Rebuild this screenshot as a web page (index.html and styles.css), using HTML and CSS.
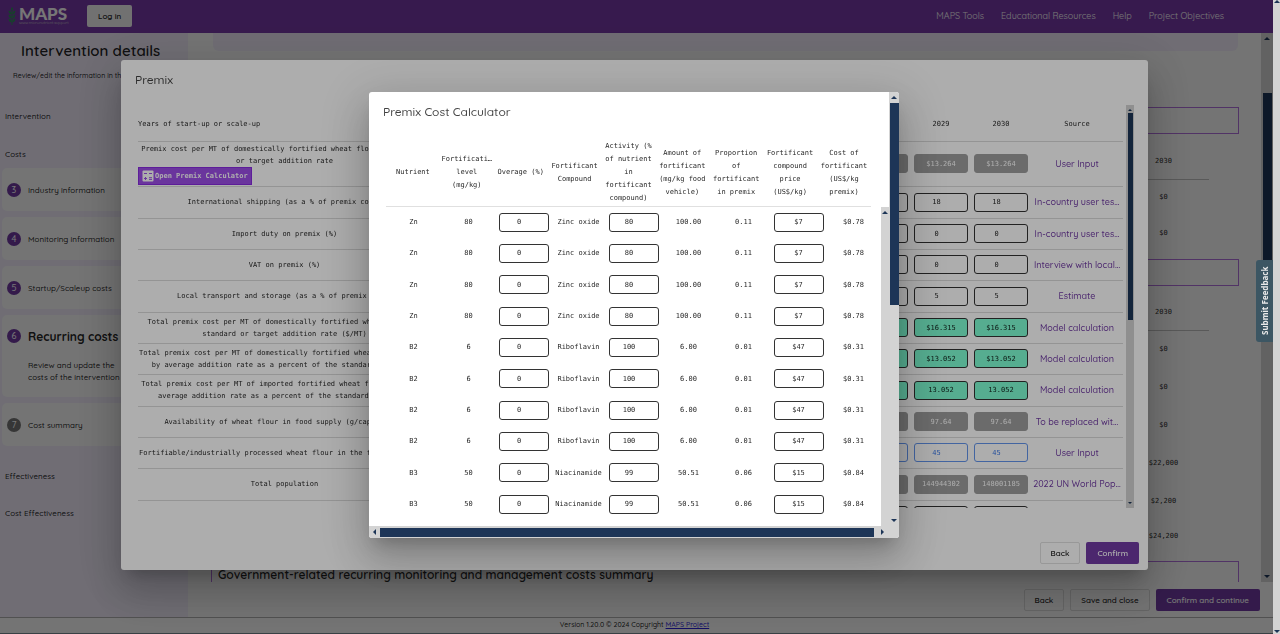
FILE: index.html
```html
<!DOCTYPE html>
<html lang="en">
<head>
<meta charset="utf-8">
<title>MAPS - Intervention details</title>
<link rel="stylesheet" href="styles.css">
</head>
<body>
<div class="app">
  <header class="topbar">
    <a class="logo" href="#">
      <svg class="logo-mark" viewBox="0 0 8 18" aria-hidden="true">
        <path d="M4 1v17" stroke="#2f8f5b" stroke-width="1"/>
        <path d="M4 4C2.500 3 3 1 4 0c1 1 1.500 3 0 4zM3.600 7.500C1 7.200.5 5 .7 3.500c2 .4 3 2 2.900 4zM4.400 7.500C7 7.200 7.500 5 7.300 3.500c-2 .4-3 2-2.900 4zM3.600 11.500C1 11.200.5 9 .7 7.500c2 .4 3 2 2.900 4zM4.400 11.500C7 11.200 7.500 9 7.300 7.500c-2 .4-3 2-2.900 4zM3.600 15.500C1 15.200.5 13 .7 11.500c2 .4 3 2 2.900 4zM4.400 15.500C7 15.200 7.500 13 7.300 11.500c-2 .4-3 2-2.900 4z" fill="#2f8f5b"/>
      </svg>
      <span class="logo-text"><strong>MAPS</strong><small>www.micronutrient.support</small></span>
    </a>
    <button class="btn login">Log in</button>
    <nav class="topnav">
      <a href="#">MAPS Tools</a>
      <a href="#">Educational Resources</a>
      <a href="#">Help</a>
      <a href="#">Project Objectives</a>
    </nav>
  </header>

  <main class="main">
    <aside class="sidebar">
      <h1>Intervention details</h1>
      <p class="intro">Review/edit the information in the</p>
      <h2 class="group">Intervention</h2>
      <h2 class="group costs">Costs</h2>
      <ol class="steps">
        <li class="step"><span class="num">3</span><span>Industry information</span></li>
        <li class="step"><span class="num">4</span><span>Monitoring information</span></li>
        <li class="step"><span class="num">5</span><span>Startup/Scaleup costs</span></li>
        <li class="step current"><span class="num">6</span><div><h3>Recurring costs</h3><p>Review and update the<br>costs of the intervention</p></div></li>
        <li class="step"><span class="num idle">7</span><span>Cost summary</span></li>
      </ol>
      <h2 class="group after">Effectiveness</h2>
      <h2 class="group last">Cost Effectiveness</h2>
    </aside>

    <section class="content">
      <div class="scroller">
        <div class="pane">
          <div class="notice"></div>
          <div class="summary first"></div>
          <table class="costs-table one">
            <thead><tr><th>2030</th></tr></thead>
            <tbody><tr><td>$0</td></tr><tr><td>$0</td></tr></tbody>
          </table>
          <div class="summary"></div>
          <table class="costs-table two">
            <thead><tr><th>2030</th></tr></thead>
            <tbody><tr><td>$0</td></tr><tr><td>$0</td></tr><tr><td>$0</td></tr><tr><td>$22,000</td></tr><tr><td>$2,200</td></tr><tr class="sum"><td>$24,200</td></tr></tbody>
          </table>
          <div class="summary tail"><h2>Government-related recurring monitoring and management costs summary</h2></div>
        </div>
        <div class="bar bar-page" aria-hidden="true"><i class="up"></i><b></b><i class="down"></i></div>
      </div>
      <div class="actions">
        <button class="btn outline">Back</button>
        <button class="btn outline">Save and close</button>
        <button class="btn primary">Confirm and continue</button>
      </div>
    </section>
  </main>

  <footer class="footer">Version 1.20.0 © 2024 Copyright <a href="#">MAPS Project</a></footer>
</div>
<div class="bar bar-window" aria-hidden="true"><i class="up"></i><i class="down"></i></div>

<div class="overlay">
  <div class="dialog premix" role="dialog" aria-label="Premix">
    <h2>Premix</h2>
    <div class="premix-body">
      <div class="clip">
        <table class="premix-table">
          <colgroup><col class="c-label"><col><col><col><col><col><col><col><col><col><col><col class="c-source"></colgroup>
          <thead><tr id="years"><th class="label">Years of start-up or scale-up</th></tr></thead>
          <tbody id="premix-rows"></tbody>
        </table>
      </div>
      <div class="bar bar-premix" aria-hidden="true"><i class="up"></i><b></b><i class="down"></i></div>
    </div>
    <div class="dialog-actions">
      <button class="btn outline">Back</button>
      <button class="btn primary">Confirm</button>
    </div>
  </div>
</div>

<div class="overlay">
  <div class="dialog calc" role="dialog" aria-label="Premix Cost Calculator">
    <div class="calc-main">
      <h2>Premix Cost Calculator</h2>
      <table class="calc-table calc-head">
        <thead><tr>
          <th>Nutrient</th>
          <th>Fortificati…<br>level<br>(mg/kg)</th>
          <th>Overage (%)</th>
          <th>Fortificant<br>Compound</th>
          <th>Activity (%<br>of nutrient<br>in<br>fortificant<br>compound)</th>
          <th>Amount of<br>fortificant<br>(mg/kg food<br>vehicle)</th>
          <th>Proportion<br>of<br>fortificant<br>in premix</th>
          <th>Fortificant<br>compound<br>price<br>(US$/kg)</th>
          <th>Cost of<br>fortificant<br>(US$/kg<br>premix)</th>
        </tr></thead>
      </table>
      <div class="calc-body">
        <div class="clip">
          <table class="calc-table"><tbody id="calc-rows"></tbody></table>
        </div>
        <div class="bar bar-calc" aria-hidden="true"><i class="up"></i></div>
      </div>
    </div>
    <div class="bar bar-dialog" aria-hidden="true"><i class="up"></i><b></b><i class="down"></i></div>
    <div class="bar-h" aria-hidden="true"><i class="left"></i><b></b><i class="right"></i></div>
  </div>
</div>
<button class="feedback">Submit Feedback</button>
<script src="script.js"></script>
</body>
</html>
```

FILE: styles.css
```css
* { box-sizing: border-box; }
body {
  margin: 0;
  height: 100vh;
  display: flex;
  overflow: hidden;
  font-family: Quicksand, Lato, sans-serif;
  font-size: 9px;
  color: rgba(0, 0, 0, 0.87);
}
h1, h2, h3, p, ol { margin: 0; padding: 0; font-weight: 500; }
a { text-decoration: none; color: inherit; }
input, button { font-family: inherit; font-size: inherit; color: inherit; }
table { border-collapse: collapse; table-layout: fixed; }
th { font-weight: 400; }
th, td { padding: 0; text-align: center; }

.app { flex: 1; min-width: 0; display: flex; flex-direction: column; background: #fafafa; }
.btn {
  height: 22px;
  padding: 0 10px;
  border: 1px solid transparent;
  border-radius: 2px;
  background: transparent;
  font-size: 8px;
  font-weight: 600;
  white-space: nowrap;
}
.btn.outline { border-color: rgba(0, 0, 0, 0.12); }
.btn.primary { background: #703aa3; color: #fff; }

.topbar { height: 33px; flex: none; display: flex; align-items: center; background: #783aa9; color: #fff; padding: 0 49px 2px 8px; }
.logo { display: flex; align-items: center; gap: 3px; width: 79px; }
.logo-mark { width: 8px; height: 18px; }
.logo-text { display: flex; flex-direction: column; align-items: flex-start; }
.logo-text strong { font: 900 17px/14px Lato, sans-serif; }
.logo-text small { font-size: 4px; line-height: 4px; color: #ccc; }
.login { background: #f5f5f5; color: #222; }
.topnav { margin-left: auto; display: flex; gap: 17px; }

.main { flex: 1; min-height: 0; display: flex; }
.sidebar { width: 188px; flex: none; background: #f1ecfb; overflow: hidden; white-space: nowrap; font-size: 8px; font-weight: 500; }
.sidebar h1 { padding: 8px 0 0 21px; font-size: 15px; line-height: 20px; font-weight: 600; }
.intro { padding: 9px 0 0 13px; font-size: 7px; line-height: 12px; }
.group { padding: 28px 0 0 5px; font-size: 8px; line-height: 12px; }
.group.costs { padding-top: 26px; }
.group.after { padding-top: 24px; }
.group.last { padding-top: 25px; }
.steps { list-style: none; display: flex; flex-direction: column; gap: 6px; padding: 8px 2px 0 2px; }
.step { min-height: 43px; display: flex; align-items: center; gap: 7px; padding-left: 5px; border-radius: 5px; background: #fafafa; }
.step.current { min-height: 82px; align-items: flex-start; padding-top: 14px; line-height: 12px; }
.step h3 { font-size: 12px; line-height: 15px; font-weight: 700; padding-bottom: 15px; }
.num { width: 14px; height: 14px; border-radius: 50%; background: #703aa3; color: #fff; display: grid; place-items: center; font-size: 9px; }
.num.idle { background: #757575; }

.content { flex: 1; min-width: 0; display: flex; flex-direction: column; }
.scroller { flex: 1; min-height: 0; display: flex; }
.pane { flex: 1; overflow: hidden; padding: 0 22px 0 23px; }
.notice { height: 18px; margin: 0 1px 0 2px; border-radius: 0 0 6px 6px; background: #f1ecfb; }
.summary { height: 27px; border: 1px solid #b06fdc; }
.summary.first { margin-top: 56px; }
.summary.tail { margin-top: 10px; padding: 5px 6px; }
.summary h2 { font-size: 12px; line-height: 16px; font-weight: 600; }
.costs-table { width: 91px; margin: 0 30px 0 auto; font-family: "DejaVu Sans Mono", monospace; font-size: 7px; }
.costs-table th { height: 35px; border-bottom: 1px solid rgba(0, 0, 0, 0.12); }
.costs-table.one { margin-top: 10px; margin-bottom: 8px; }
.costs-table.one td { height: 36px; }
.costs-table.two { margin-top: 9px; }
.costs-table.two td { height: 38px; }
.costs-table.two .sum td { height: 31px; }
.actions { height: 35px; flex: none; display: flex; align-items: center; justify-content: flex-end; gap: 6px; padding: 1px 13px 0 0; }
.footer { height: 17px; flex: none; border-top: 1px solid #b0b0b0; border-bottom: 1px solid #7a8a94; text-align: center; font-size: 7px; font-weight: 500; line-height: 14px; padding-right: 4px; }
.footer a { color: #2a1fd8; text-decoration: underline; }

.bar { flex: none; display: flex; flex-direction: column; align-items: center; background: #d3d3d3; position: relative; }
.bar b { background: #1d3557; width: 9px; }
.bar i, .bar-h i { flex: none; width: 0; height: 0; border: 3px solid transparent; }
.bar .up { border-top: 0; border-bottom-color: #1d3557; margin: 4px 0 3px; }
.bar .down { border-bottom: 0; border-top-color: #1d3557; margin: auto 0 4px; }
.bar-page { width: 12px; }
.bar-page .up { margin-bottom: 53px; }
.bar-page b { height: 38%; }
.bar-window { width: 7px; z-index: 3; }
.bar-window .up { margin-top: 0; }
.bar-window .down { margin-bottom: 1px; }
.bar-premix { width: 8px; }
.bar-premix .up { border-width: 2px; border-top: 0; margin-bottom: 2px; }
.bar-premix .down { border-width: 2px; border-bottom: 0; }
.bar-premix b { width: 5px; height: 207px; }
.bar-calc { width: 8px; }
.bar-dialog { grid-row: 1; grid-column: 2; }
.bar-dialog .up { margin-bottom: 4px; }
.bar-dialog b { height: 202px; }
.bar-h { grid-column: 1 / 3; display: flex; align-items: center; background: #d3d3d3; padding: 0 15px 0 4px; }
.bar-h b { flex: 1; height: 9px; background: #1d3557; margin: 0 7px 0 4px; }
.bar-h .left { border-left-width: 0; border-right-color: #1d3557; }
.bar-h .right { border-right-width: 0; border-left-color: #1d3557; }

.overlay { position: fixed; inset: 0 7px 0 0; padding: 0 4px 4px 0; display: grid; place-items: center; background: rgba(0, 0, 0, 0.32); }
.dialog {
  background: #fff;
  border-radius: 3px;
  overflow: hidden;
  box-shadow: 0 11px 15px -7px rgba(0, 0, 0, 0.2), 0 24px 38px 3px rgba(0, 0, 0, 0.14), 0 9px 46px 8px rgba(0, 0, 0, 0.12);
}
.dialog h2 { font-size: 12px; line-height: 16px; color: rgba(0, 0, 0, 0.75); }
.premix { width: 81%; height: 81%; max-width: 1027px; max-height: 510px; display: flex; flex-direction: column; padding: 12px 14px 6px; }
.premix-body { flex: 1; min-height: 0; display: flex; justify-content: space-between; margin: 17px 0 34px 3px; }
.clip { flex: 1; min-width: 0; overflow: hidden; }
.premix-table, .calc-table { font-family: "DejaVu Sans Mono", monospace; font-size: 7px; white-space: nowrap; }
.premix-table { width: 985px; line-height: 12px; }
.c-label { width: 293px; }
.c-source { width: 92px; }
.premix-table th { height: 36px; padding-top: 3px; border-bottom: 1px solid rgba(0, 0, 0, 0.14); }
.premix-table th.label { text-align: left; }
.premix-table td { height: 31px; border-bottom: 1px solid rgba(0, 0, 0, 0.14); }
.premix-table tr:nth-child(3n + 2) td { height: 32px; }
.premix-table .priced td { height: 45px; }
.premix-table .source { font-family: Quicksand, Lato, sans-serif; font-size: 9px; color: #703aa3; font-weight: 500; }
.premix-body .clip { padding-right: 3px; }
.open-calc { display: flex; align-items: center; gap: 1px; height: 18px; padding: 0 3px; border: 1px solid #8a2be2; background: #9c4ee8; color: #fff; font-weight: 700; }
.open-calc svg { width: 12px; height: 12px; }
.field {
  display: block;
  width: 54px;
  height: 19px;
  margin: 0 auto;
  padding: 0 9px 0 0;
  border: 1px solid #333;
  border-radius: 3px;
  background: #fff;
  text-align: center;
}
.field.gray { padding: 0; border-color: #9e9e9e; background: #9e9e9e; color: #fff; }
.field.green { padding: 0; background: #7fffd4; }
.field.blue { border-color: #6495ed; color: #3f7be8; }
.dialog-actions { display: flex; justify-content: flex-end; gap: 6px; margin-right: -5px; }

.calc { width: 42%; height: 71%; max-width: 530px; max-height: 446px; margin-right: 1px; display: grid; grid-template: minmax(0, 1fr) 12px / minmax(0, 1fr) 10px; }
.calc-main { display: flex; flex-direction: column; min-height: 0; }
.calc h2 { padding: 12px 0 0 14px; }
.calc-head { width: calc(100% - 35px); margin: 17px 18px 0 17px; line-height: 13px; }
.calc-head th { height: 69px; padding-top: 3px; border-bottom: 1px solid rgba(0, 0, 0, 0.12); }
.calc-body { flex: 1; min-height: 0; display: flex; padding-left: 17px; }
.calc-body .calc-table { width: 100%; }
.calc-body td { height: 31px; }
.calc-body tr:nth-child(3n) td { height: 32px; }
.calc-body .field { width: 50px; }
.calc-body .field.price { padding: 0; }

.feedback {
  position: fixed;
  right: 7px;
  top: 41%;
  width: 17px;
  height: 82px;
  padding: 0;
  border: 0;
  border-radius: 0 3px 3px 0;
  background: #3c5663;
  color: #e8e8e8;
  font-family: "Noto Sans", sans-serif;
  font-size: 8px;
  font-weight: 700;
  writing-mode: vertical-rl;
  transform: rotate(180deg);
}
```

FILE: script.js
```js
const repeat = (value) => Array(8).fill(value);

const premixRows = [
  { label: 'Premix cost per MT of domestically fortified wheat flour at standard<br>or target addition rate', values: [...repeat('$13.264'), '$13.264', '$13.264'], kind: 'gray', source: 'User Input', row: 'priced', calc: true },
  { label: 'International shipping (as a % of premix cost)', values: [...repeat('18'), '18', '18'], source: 'In-country user tes…' },
  { label: 'Import duty on premix (%)', values: [...repeat('0'), '0', '0'], source: 'In-country user tes…' },
  { label: 'VAT on premix (%)', values: [...repeat('0'), '0', '0'], source: 'Interview with local…' },
  { label: 'Local transport and storage (as a % of premix cost)', values: [...repeat('5'), '5', '5'], source: 'Estimate' },
  { label: 'Total premix cost per MT of domestically fortified wheat flour at<br>standard or target addition rate ($/MT)', values: [...repeat('$16.315'), '$16.315', '$16.315'], kind: 'green', source: 'Model calculation' },
  { label: 'Total premix cost per MT of domestically fortified wheat flour driven<br>by average addition rate as a percent of the standard or target', values: [...repeat('$13.052'), '$13.052', '$13.052'], kind: 'green', source: 'Model calculation' },
  { label: 'Total premix cost per MT of imported fortified wheat flour driven by<br>average addition rate as a percent of the standard or target', values: [...repeat('13.052'), '13.052', '13.052'], kind: 'green', source: 'Model calculation' },
  { label: 'Availability of wheat flour in food supply (g/capita/day)', values: [...repeat('97.64'), '97.64', '97.64'], kind: 'gray', source: 'To be replaced wit…' },
  { label: 'Fortifiable/industrially processed wheat flour in the food supply (%)', values: [...repeat('45'), '45', '45'], kind: 'blue', source: 'User Input' },
  { label: 'Total population', values: [...repeat(''), '144944302', '148001185'], kind: 'gray', source: '2022 UN World Pop…' },
  { label: '', values: [...repeat(''), '', ''], source: '' },
];

const calcButton = `<button class="open-calc"><svg viewBox="0 0 12 12" aria-hidden="true"><rect x="0.500" y="0.500" width="11" height="11" rx="1" fill="#fff"/><path d="M2 3.500h3M7 3.500h3M2 8.500h3M3.500 7v3M7 7.700h3M7 9.400h3" stroke="#9c4ee8" stroke-width="1"/></svg>Open Premix Calculator</button>`;

let years = '';
for (let year = 2021; year <= 2030; year++) years += `<th>${year}</th>`;
document.getElementById('years').insertAdjacentHTML('beforeend', years + '<th>Source</th>');

document.getElementById('premix-rows').innerHTML = premixRows.map((r) => `
  <tr class="${r.row || ''}">
    <td>${r.label}${r.calc ? calcButton : ''}</td>
    ${r.values.map((v, i) => `<td><input class="field ${r.kind || ''}" value="${v}" aria-label="${2021 + i}"></td>`).join('')}
    <td class="source"><a href="#">${r.source}</a></td>
  </tr>`).join('');

const zinc = ['Zn', '80', '0', 'Zinc oxide', '80', '100.00', '0.11', '$7', '$0.78'];
const riboflavin = ['B2', '6', '0', 'Riboflavin', '100', '6.00', '0.01', '$47', '$0.31'];
const niacinamide = ['B3', '50', '0', 'Niacinamide', '99', '50.51', '0.06', '$15', '$0.84'];
const calcRows = [zinc, zinc, zinc, zinc, riboflavin, riboflavin, riboflavin, riboflavin, niacinamide, niacinamide];
const editable = { 2: 'Overage', 4: 'Activity', 7: 'Price' };

const calcCell = (v, i) => editable[i]
  ? `<td><input class="field ${i === 7 ? 'price' : ''}" value="${v}" aria-label="${editable[i]}"></td>`
  : `<td>${v}</td>`;
const emptyRow = Array(9).fill('');

document.getElementById('calc-rows').innerHTML = [...calcRows, emptyRow]
  .map((cells) => `<tr>${cells.map(calcCell).join('')}</tr>`).join('');
```
